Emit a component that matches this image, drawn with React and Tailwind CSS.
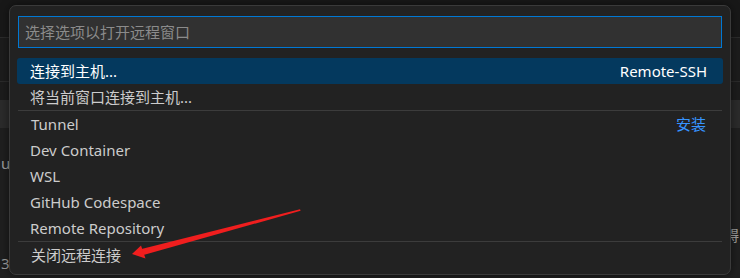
const rows = [
  { label: '连接到主机...', right: 'Remote-SSH', selected: true },
  { label: '将当前窗口连接到主机...' },
  { label: 'Tunnel', right: '安装', link: true, sep: true },
  { label: 'Dev Container' },
  { label: 'WSL' },
  { label: 'GitHub Codespace' },
  { label: 'Remote Repository' },
  { label: '关闭远程连接', sep: true },
];

function Backdrop() {
  return (
    <div className="flex flex-col w-[740px] h-[278px] bg-[#1f1f1f]">
      <div className="h-[38px] bg-[#181818] border-b border-[#2b2b2b]" />
      <div className="h-[44px] bg-[#1c1c1c] border-b border-[#2b2b2b]" />
      <div className="h-[18px] bg-[#1c1c1c]" />
      <div className="h-[28px] bg-[#2b2b2b]" />
      <div className="flex-1 flex justify-between pl-[1px] pr-[1px] text-[15px] text-[#9d9d9d]">
        <div className="flex flex-col justify-between pt-[24px] pb-[4px]">
          <span>ui</span>
          <span>3</span>
        </div>
        <div className="flex flex-col pt-[96px]">
          <span>鍀</span>
        </div>
      </div>
    </div>
  );
}

function Arrow() {
  return (
    <svg className="absolute left-0 top-0 pointer-events-none" width="740" height="278" viewBox="0 0 740 278">
      {/* tapered shaft + head */}
      <polygon points="300,209.3 300.6,210.8 143.5,255 141.5,249" fill="#f01e1e" />
      <polygon points="132,254 141,245.5 145.5,258.5" fill="#f01e1e" />
    </svg>
  );
}

export default function App() {
  return (
    <div className="relative w-[740px] h-[278px] overflow-hidden" style={{ fontFamily: '"Noto Sans", "Noto Sans CJK SC", sans-serif' }}>
      <Backdrop />

      {/* Quick pick panel */}
      <div className="absolute left-[9px] top-[5px] w-[722px] h-[270px] rounded-[7px] border border-[#3a3a3a] bg-[#222222] px-[7px] pt-[10px] shadow-[0_0_8px_rgba(0,0,0,0.5)]">
        <div className="h-[32px] mx-[1px] border border-[#0078d4] bg-[#313131] flex items-center px-[6px] text-[15px] text-[#8b8b8b]">
          选择选项以打开远程窗口
        </div>

        <div className="mt-[10px] flex flex-col">
          {rows.map((r) => (
            <div
              key={r.label}
              className={`h-[26px] flex items-center justify-between pl-[13px] pr-[16px] text-[15px] ${
                r.selected ? 'bg-[#04395e] rounded-[3px] text-white' : 'text-[#cccccc]'
              } ${r.sep ? 'border-t border-[#3c3c3c] h-[27px] mx-[1px] pl-[12px] pr-[15px]' : ''}`}
            >
              <span>{r.label}</span>
              {r.right && (
                <span className={r.link ? 'text-[#3794ff]' : 'text-white'}>{r.right}</span>
              )}
            </div>
          ))}
        </div>
      </div>

      <Arrow />
    </div>
  );
}
